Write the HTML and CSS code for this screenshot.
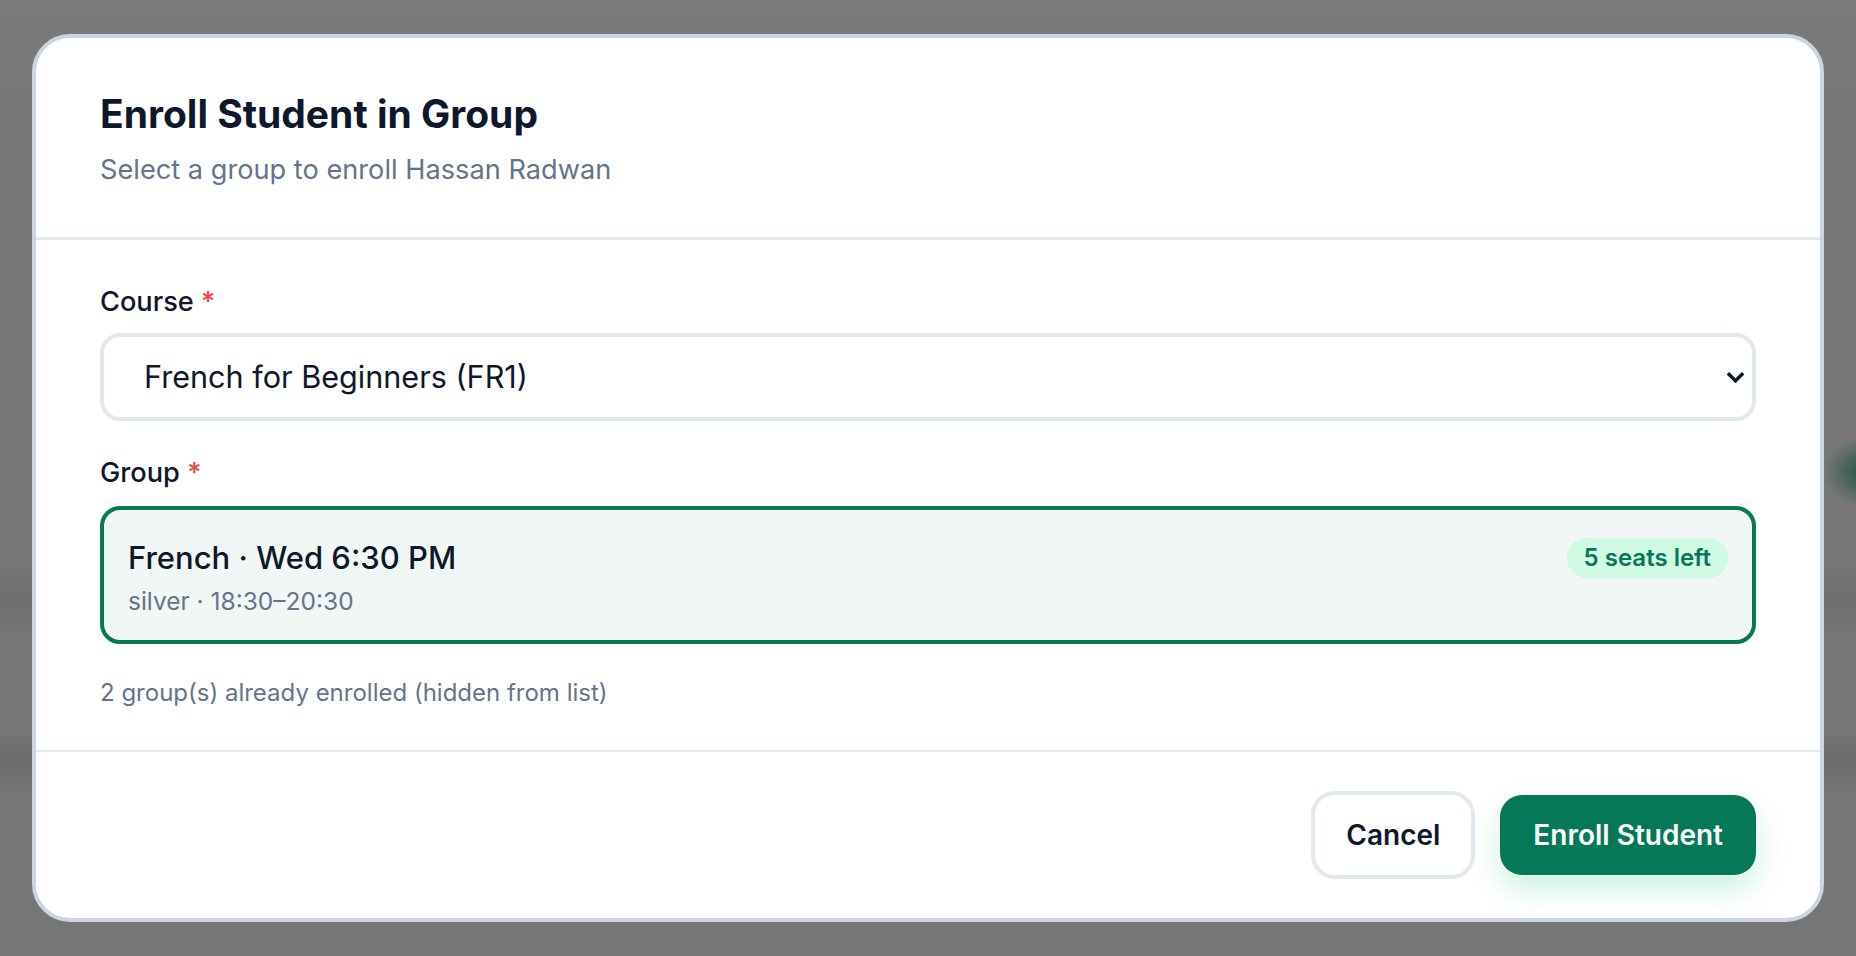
FILE: index.html
```html
<!DOCTYPE html>
<html lang="en">
<head>
<meta charset="utf-8">
<title>Enroll Student in Group</title>
<link rel="stylesheet" href="styles.css">
</head>
<body>
<div class="backdrop">
  <div class="modal" role="dialog" aria-labelledby="dlg-title">
    <header class="modal-header">
      <h2 class="title" id="dlg-title">Enroll Student in Group</h2>
      <p class="subtitle">Select a group to enroll Hassan Radwan</p>
    </header>
    <div class="modal-body">
      <div class="field">
        <label class="label">Course <span class="req">*</span></label>
        <div class="select">
          <span class="select-value">French for Beginners (FR1)</span>
          <svg class="chevron" viewBox="0 0 20 12" width="20" height="12" aria-hidden="true">
            <polyline points="2,2 10,10 18,2" fill="none" stroke="#0f172a" stroke-width="3.6" stroke-linejoin="miter" stroke-linecap="butt"/>
          </svg>
        </div>
      </div>
      <div class="field field-group">
        <label class="label">Group <span class="req">*</span></label>
        <div class="group-card">
          <div class="group-info">
            <div class="group-name">French · Wed 6:30 PM</div>
            <div class="group-meta">silver · 18:30–20:30</div>
          </div>
          <span class="badge">5 seats left</span>
        </div>
      </div>
      <p class="hint">2 group(s) already enrolled (hidden from list)</p>
    </div>
    <footer class="modal-footer">
      <button class="btn btn-secondary" type="button">Cancel</button>
      <button class="btn btn-primary" type="button">Enroll Student</button>
    </footer>
  </div>
</div>
</body>
</html>
```
FILE: styles.css
```css
* { box-sizing: border-box; }

html, body {
  margin: 0;
  padding: 0;
}

body {
  font-family: Inter, "Noto Sans", "Liberation Sans", sans-serif;
  color: #0f172a;
  background-color: #767676;
  background-image:
    radial-gradient(ellipse 38px 34px at 1862px 472px, rgba(36, 84, 64, 0.95), rgba(36, 84, 64, 0) 100%),
    linear-gradient(180deg, rgba(255,255,255,0.04) 0px, rgba(255,255,255,0.03) 30px, rgba(0,0,0,0) 120px),
    linear-gradient(180deg, rgba(0,0,0,0) 560px, rgba(0,0,0,0.06) 600px, rgba(0,0,0,0) 640px, rgba(0,0,0,0) 730px, rgba(0,0,0,0.08) 760px, rgba(0,0,0,0) 800px);
  -webkit-font-smoothing: antialiased;
}

.backdrop {
  height: 956px;
  display: flex;
  align-items: center;
  justify-content: center;
}

.modal {
  width: 1792px;
  background: #ffffff;
  border: 4px solid #cbd5e1;
  border-radius: 38px;
  overflow: hidden;
}

.modal-header {
  padding: 53px 64px 51px;
  border-bottom: 3px solid #e2e8f0;
}

.title {
  margin: 0;
  font-size: 39px;
  line-height: 46px;
  font-weight: 700;
  letter-spacing: 0;
  color: #0f172a;
}

.subtitle {
  margin: 17px 0 0;
  font-size: 27.2px;
  line-height: 32px;
  color: #64748b;
}

.modal-body {
  padding: 44px 64px 42px;
  display: flex;
  flex-direction: column;
  border-bottom: 2px solid #e2e8f0;
}

.field {
  display: flex;
  flex-direction: column;
  gap: 13px;
}

.field-group {
  margin-top: 34px;
  gap: 15px;
}

.label {
  font-size: 27.2px;
  line-height: 36px;
  font-weight: 500;
  color: #0f172a;
}

.req {
  color: #ef4444;
}

.select {
  height: 88px;
  border: 4px solid #e2e8f0;
  border-radius: 20px;
  background: #ffffff;
  display: flex;
  align-items: center;
  justify-content: space-between;
  padding: 0 7px 0 40px;
}

.select-value {
  font-size: 30.6px;
  line-height: 36px;
  color: #0f172a;
}

.chevron {
  display: block;
  width: 19px;
  height: 12px;
}

.group-card {
  border: 4px solid #047857;
  border-radius: 20px;
  background: #f0f7f5;
  padding: 28px 24px 24px;
  display: flex;
  justify-content: space-between;
  align-items: flex-start;
}

.group-info {
  display: flex;
  flex-direction: column;
  gap: 8px;
}

.group-name {
  font-size: 31px;
  line-height: 40px;
  font-weight: 500;
  color: #0f172a;
}

.group-meta {
  font-size: 24.5px;
  line-height: 30px;
  color: #64748b;
}

.badge {
  height: 40px;
  padding: 0 17px;
  border-radius: 20px;
  background: #d1fae5;
  color: #047857;
  font-size: 24px;
  font-weight: 600;
  line-height: 40px;
  white-space: nowrap;
}

.hint {
  margin: 34px 0 0;
  font-size: 24px;
  line-height: 30px;
  color: #64748b;
}

.modal-footer {
  display: flex;
  justify-content: flex-end;
  align-items: center;
  gap: 25px;
  padding: 39px 64px 39px;
}

.btn {
  font-family: inherit;
  font-size: 28px;
  font-weight: 600;
  line-height: 36px;
  cursor: pointer;
}

.btn-secondary {
  height: 88px;
  padding: 0 31px;
  border: 4px solid #e2e8f0;
  border-radius: 24px;
  background: #ffffff;
  color: #0f172a;
}

.btn-primary {
  height: 80px;
  padding: 0 33px;
  border: 0;
  border-radius: 22px;
  background: #047857;
  color: #ffffff;
  box-shadow: 0 14px 30px rgba(16, 185, 129, 0.22);
}
```
